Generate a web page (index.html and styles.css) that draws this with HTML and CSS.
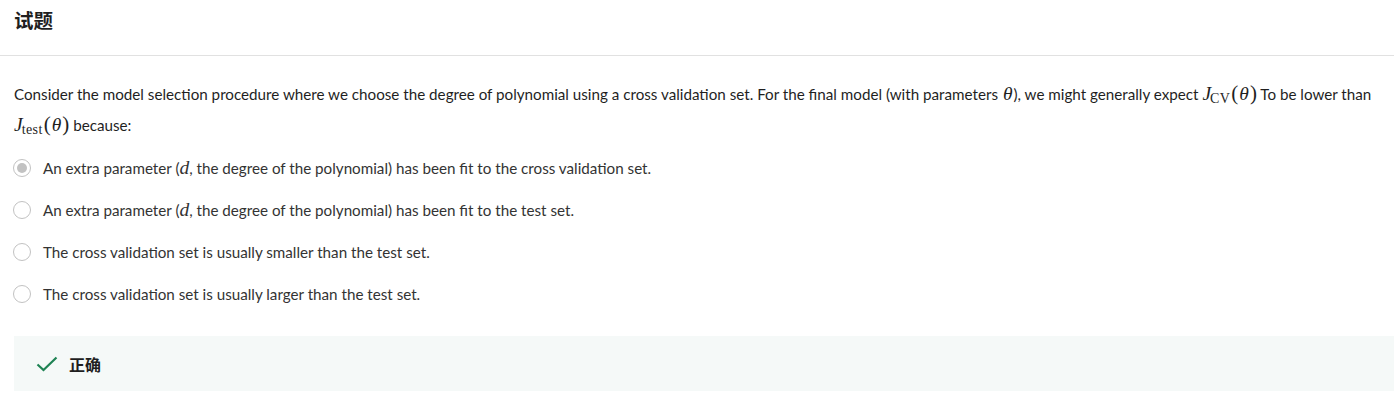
FILE: index.html
```html
<!DOCTYPE html>
<html lang="zh">
<head>
<meta charset="utf-8">
<link rel="stylesheet" href="styles.css">
</head>
<body>
<header class="top">
  <h2 class="title">试题</h2>
</header>
<main class="content">
  <p class="question">Consider the model selection procedure where we choose the degree of polynomial using a cross validation set. For the final model (with parameters <span class="m th">θ</span>), we might generally expect <span class="m">J</span><sub class="sub">CV</sub><span class="r">(</span><span class="m th">θ</span><span class="r">)</span> To be lower than <span class="m">J</span><sub class="sub">test</sub><span class="r">(</span><span class="m th">θ</span><span class="r">)</span> because:</p>
  <ul class="options">
    <li class="opt"><span class="radio checked"></span><span class="label">An extra parameter (<span class="m">d</span>, the degree of the polynomial) has been fit to the cross validation set.</span></li>
    <li class="opt"><span class="radio"></span><span class="label">An extra parameter (<span class="m">d</span>, the degree of the polynomial) has been fit to the test set.</span></li>
    <li class="opt"><span class="radio"></span><span class="label">The cross validation set is usually smaller than the test set.</span></li>
    <li class="opt"><span class="radio"></span><span class="label">The cross validation set is usually larger than the test set.</span></li>
  </ul>
  <div class="result">
    <svg class="check" width="22" height="16" viewBox="0 0 22 16"><path d="M1.5 8.5 L7.5 14 L20.5 1.5" fill="none" stroke="#1f8354" stroke-width="2.2"/></svg>
    <span class="result-text">正确</span>
  </div>
</main>
</body>
</html>
```
FILE: styles.css
```css
html, body { margin: 0; padding: 0; background: #fff; }
body {
  font-family: "Lato", "Noto Sans CJK SC", sans-serif;
  color: #1f1f1f;
  font-size: 15.2px;
}
.top {
  height: 56px;
  border-bottom: 1px solid #e1e1e1;
  box-sizing: border-box;
  padding: 5px 14px 0;
}
.title {
  margin: 0;
  font-family: "Noto Sans CJK SC", sans-serif;
  font-size: 19.5px;
  font-weight: 700;
  line-height: 29px;
  color: #1f1f1f;
}
.content { padding: 23px 0 0 14px; }
.question {
  margin: 0 8px 0 0;
  line-height: 31px;
}
.m {
  font-family: "Liberation Serif", serif;
  font-style: italic;
  font-size: 19.5px;
  line-height: 1;
}
.th { padding: 0 1px; }
.r {
  font-family: "Liberation Serif", serif;
  font-size: 21px;
  line-height: 1;
}
.sub {
  font-family: "Liberation Serif", serif;
  font-size: 14px;
  vertical-align: -3px;
  line-height: 0;
  margin-left: -1px;
  margin-right: 1px;
  letter-spacing: 0.4px;
}
.options { list-style: none; margin: 6px 0 0; padding: 0; }
.opt {
  display: flex;
  align-items: center;
  height: 42px;
  color: #333;
}
.radio {
  width: 18px; height: 18px;
  border: 1.5px solid #c2c2c2;
  border-radius: 50%;
  box-sizing: border-box;
  margin-left: -1px;
  margin-right: 12px;
  display: flex; align-items: center; justify-content: center;
  flex: none;
}
.radio.checked::after {
  content: "";
  width: 10px; height: 10px; border-radius: 50%;
  background: #c2c2c2;
}
.result {
  margin-top: 21px;
  height: 55px;
  background: #f5f9f8;
  display: flex;
  align-items: center;
  padding-left: 22px;
}
.check { margin-right: 11px; }
.result-text {
  font-family: "Noto Sans CJK SC", sans-serif;
  font-weight: 700;
  font-size: 16px;
  color: #1f1f1f;
}
```
